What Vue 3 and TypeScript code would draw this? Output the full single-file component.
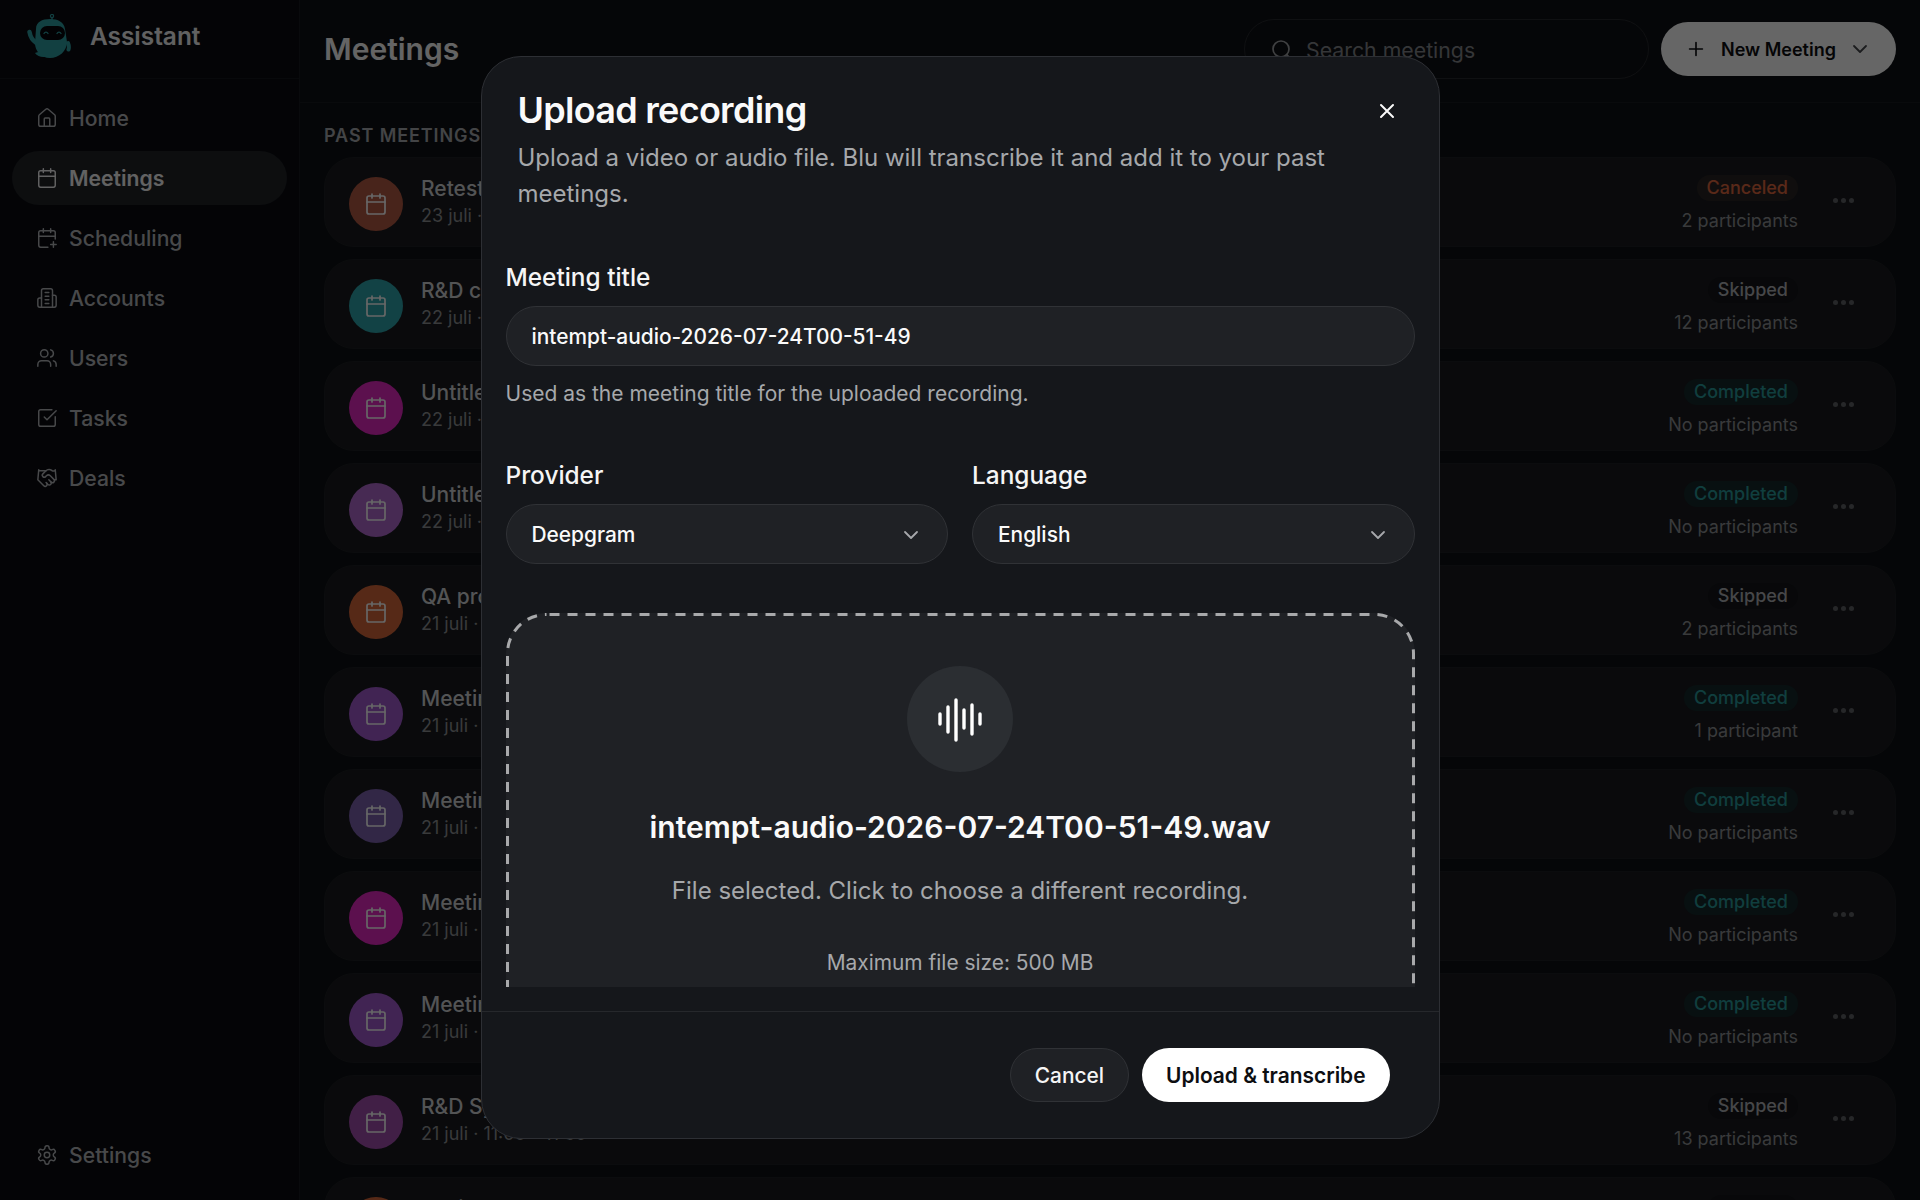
<template>
  <div class="app">
    <aside class="sidebar">
      <div class="brand">
        <svg class="logo" viewBox="0 0 44 44" width="44" height="44" fill="none">
          <circle cx="25" cy="2" r="1.6" stroke="#2fa0a4" stroke-width="1.2" />
          <path d="M25 3.5V6" stroke="#2fa0a4" stroke-width="1.4" />
          <path d="M2.5 18c.8 5 3 8.5 7 11" stroke="#2fa0a4" stroke-width="4.5" stroke-linecap="round" />
          <path d="M41 29c1 2.500 1.200 4.500.5 6.500" stroke="#2fa0a4" stroke-width="4" stroke-linecap="round" />
          <path d="M8 39c3-1.500 5-1.500 9 0l1 4c-4 .5-8-1-10-4Z" fill="#2fa0a4" />
          <path d="M9 15C9 8 15 5 23 5c8 0 14 3 15 10l2 13c0 9-8 16-17 16-9 0-15-7-15-15Z" fill="#2fa0a4" />
          <rect x="13" y="12" width="25" height="14" rx="7" fill="#05060a" />
          <path d="M17 19.500c1-1.800 3-1.800 4 0M30 19.500c1-1.800 3-1.800 4 0" stroke="#2fa0a4" stroke-width="1.300" stroke-linecap="round" />
        </svg>
        <span class="brand-name">Assistant</span>
      </div>
      <nav class="nav">
        <a v-for="item in navItems" :key="item.label" class="nav-item" :class="{ active: item.label === 'Meetings' }">
          <svg class="nav-icon" viewBox="0 0 24 24" v-html="item.icon"></svg>
          {{ item.label }}
        </a>
      </nav>
      <a class="nav-item settings">
        <svg class="nav-icon" viewBox="0 0 24 24" v-html="settingsIcon"></svg>
        Settings
      </a>
    </aside>

    <main class="main">
      <header class="main-header">
        <h1>Meetings</h1>
        <div class="header-actions">
          <div class="search">
            <svg class="search-icon" viewBox="0 0 24 24">
              <circle cx="11" cy="11" r="8" />
              <path d="m21 21-4.300-4.300" />
            </svg>
            <span>Search meetings</span>
          </div>
          <button class="new-btn">
            <svg class="plus" viewBox="0 0 24 24"><path d="M5 12h14M12 5v14" /></svg>
            New Meeting
            <svg class="new-chevron" viewBox="0 0 24 24"><path d="m6 9 6 6 6-6" /></svg>
          </button>
        </div>
      </header>

      <section class="content">
        <div class="section-label">PAST MEETINGS</div>
        <div class="list">
          <div v-for="m in meetings" :key="m.title + m.color" class="row">
            <div class="avatar" :style="{ background: m.color }">
              <svg class="cal" viewBox="0 0 24 24" v-html="calendarIcon"></svg>
            </div>
            <div class="row-text">
              <div class="row-title">{{ m.title }}</div>
              <div class="row-date">{{ m.date }}</div>
            </div>
            <div class="row-meta">
              <span class="status" :class="m.status.toLowerCase()">{{ m.status }}</span>
              <span class="participants">{{ m.participants }}</span>
            </div>
            <div class="dots"><i></i><i></i><i></i></div>
          </div>
        </div>
      </section>
    </main>

    <div class="overlay">
      <div class="modal">
        <div class="modal-head">
          <div>
            <h2>Upload recording</h2>
            <p>Upload a video or audio file. Blu will transcribe it and add it to your past meetings.</p>
          </div>
          <svg class="close" viewBox="0 0 24 24"><path d="M18 6 6 18M6 6l12 12" /></svg>
        </div>

        <div class="modal-body">
          <label class="field-label">Meeting title</label>
          <div class="input">intempt-audio-2026-07-24T00-51-49</div>
          <div class="helper">Used as the meeting title for the uploaded recording.</div>

          <div class="select-grid">
            <div v-for="s in selects" :key="s.label">
              <label class="field-label">{{ s.label }}</label>
              <div class="input select">
                {{ s.value }}
                <svg class="chevron" viewBox="0 0 24 24"><path d="m6 9 6 6 6-6" /></svg>
              </div>
            </div>
          </div>

          <div class="dropzone">
            <!-- css dashed borders come out too short, the reference has long dashes -->
            <svg class="dash-frame"><rect class="dash-rect" x="1.5" y="1.5" rx="39" ry="39" /></svg>
            <div class="wave-circle">
              <svg viewBox="0 0 48 48" width="48" height="48">
                <path d="M4 19v10M12 12v25M20 5v40M28 15v18M36 10v29M44 19v10" />
              </svg>
            </div>
            <div class="file-name">intempt-audio-2026-07-24T00-51-49.wav</div>
            <div class="file-hint">File selected. Click to choose a different recording.</div>
            <div class="file-max">Maximum file size: 500 MB</div>
          </div>
        </div>

        <div class="modal-foot">
          <button class="btn cancel">Cancel</button>
          <button class="btn primary">Upload &amp; transcribe</button>
        </div>
      </div>
    </div>
  </div>
</template>

<script setup lang="ts">
interface Meeting {
  title: string
  date: string
  color: string
  status: 'Canceled' | 'Skipped' | 'Completed'
  participants: string
}

const calendarIcon =
  '<path d="M8 2v4M16 2v4M3 10h18"/><rect x="3" y="4" width="18" height="18" rx="2"/>'

const navItems = [
  {
    label: 'Home',
    icon: '<path d="M15 21v-8a1 1 0 0 0-1-1h-4a1 1 0 0 0-1 1v8"/><path d="M3 10a2 2 0 0 1 .709-1.528l7-5.999a2 2 0 0 1 2.582 0l7 5.999A2 2 0 0 1 21 10v9a2 2 0 0 1-2 2H5a2 2 0 0 1-2-2z"/>'
  },
  { label: 'Meetings', icon: calendarIcon },
  {
    label: 'Scheduling',
    icon: '<path d="M8 2v4M16 2v4M3 10h18M16 19h6M19 16v6"/><path d="M21 13V6a2 2 0 0 0-2-2H5a2 2 0 0 0-2 2v14a2 2 0 0 0 2 2h8"/>'
  },
  {
    label: 'Accounts',
    icon: '<path d="M6 22V4a2 2 0 0 1 2-2h8a2 2 0 0 1 2 2v18Z"/><path d="M6 12H4a2 2 0 0 0-2 2v6a2 2 0 0 0 2 2h2"/><path d="M18 9h2a2 2 0 0 1 2 2v9a2 2 0 0 1-2 2h-2"/><path d="M10 6h4M10 10h4M10 14h4M10 18h4"/>'
  },
  {
    label: 'Users',
    icon: '<path d="M16 21v-2a4 4 0 0 0-4-4H6a4 4 0 0 0-4 4v2"/><circle cx="9" cy="7" r="4"/><path d="M22 21v-2a4 4 0 0 0-3-3.870"/><path d="M16 3.130a4 4 0 0 1 0 7.750"/>'
  },
  {
    label: 'Tasks',
    icon: '<path d="M21 10.656V19a2 2 0 0 1-2 2H5a2 2 0 0 1-2-2V5a2 2 0 0 1 2-2h12.344"/><path d="m9 11 3 3L22 4"/>'
  },
  {
    label: 'Deals',
    icon: '<path d="m11 17 2 2a1 1 0 1 0 3-3"/><path d="m14 14 2.500 2.500a1 1 0 1 0 3-3l-3.880-3.880a3 3 0 0 0-4.240 0l-.880.880a1 1 0 1 1-3-3l2.810-2.810a5.790 5.790 0 0 1 7.060-.870l.470.280a2 2 0 0 0 1.420.250L21 4"/><path d="m21 3 1 11h-2"/><path d="M3 3 2 14l6.500 6.500a1 1 0 1 0 3-3"/><path d="M3 4h8"/>'
  }
]

const settingsIcon =
  '<path d="M12.220 2h-.440a2 2 0 0 0-2 2v.180a2 2 0 0 1-1 1.730l-.430.250a2 2 0 0 1-2 0l-.150-.080a2 2 0 0 0-2.730.730l-.220.380a2 2 0 0 0 .730 2.730l.150.100a2 2 0 0 1 1 1.720v.510a2 2 0 0 1-1 1.740l-.150.090a2 2 0 0 0-.730 2.730l.220.380a2 2 0 0 0 2.730.730l.150-.080a2 2 0 0 1 2 0l.430.250a2 2 0 0 1 1 1.730V20a2 2 0 0 0 2 2h.440a2 2 0 0 0 2-2v-.180a2 2 0 0 1 1-1.730l.430-.250a2 2 0 0 1 2 0l.150.080a2 2 0 0 0 2.730-.730l.220-.390a2 2 0 0 0-.730-2.730l-.150-.080a2 2 0 0 1-1-1.740v-.500a2 2 0 0 1 1-1.740l.150-.090a2 2 0 0 0 .730-2.730l-.220-.380a2 2 0 0 0-2.730-.730l-.150.080a2 2 0 0 1-2 0l-.430-.250a2 2 0 0 1-1-1.730V4a2 2 0 0 0-2-2z"/><circle cx="12" cy="12" r="3"/>'

const selects = [
  { label: 'Provider', value: 'Deepgram' },
  { label: 'Language', value: 'English' }
]

const meetings: Meeting[] = [
  { title: 'Retest call', date: '23 juli · 14:00', color: '#b55a44', status: 'Canceled', participants: '2 participants' },
  { title: 'R&D call', date: '22 juli · 16:30', color: '#2fa5ac', status: 'Skipped', participants: '12 participants' },
  { title: 'Untitled meeting', date: '22 juli · 15:10', color: '#e628c4', status: 'Completed', participants: 'No participants' },
  { title: 'Untitled meeting', date: '22 juli · 13:40', color: '#b26ad0', status: 'Completed', participants: 'No participants' },
  { title: 'QA process', date: '21 juli · 17:00', color: '#d8683a', status: 'Skipped', participants: '2 participants' },
  { title: 'Meeting', date: '21 juli · 15:30', color: '#a35ad0', status: 'Completed', participants: '1 participant' },
  { title: 'Meeting', date: '21 juli · 14:20', color: '#7e62b0', status: 'Completed', participants: 'No participants' },
  { title: 'Meeting', date: '21 juli · 13:15', color: '#e628c4', status: 'Completed', participants: 'No participants' },
  { title: 'Meeting', date: '21 juli · 12:05', color: '#a35ad0', status: 'Completed', participants: 'No participants' },
  { title: 'R&D Sync', date: '21 juli · 11:00 - 11:30', color: '#a44fb0', status: 'Skipped', participants: '13 participants' },
  { title: 'Review', date: '20 juli · 10:00', color: '#d8683a', status: 'Skipped', participants: '2 participants' }
]
</script>

<style scoped>
.app {
  display: flex;
  height: 100vh;
  overflow: hidden;
  background: #0e1014;
  color: #fafafa;
  font-family: Inter, "Noto Sans", sans-serif;
}

.sidebar {
  width: 299px;
  flex: none;
  display: flex;
  flex-direction: column;
  background: #0a0c11;
  border-right: 1px solid #17191e;
  box-sizing: content-box;
}

.brand {
  height: 79px;
  box-sizing: border-box;
  padding: 0 0 6px 27px;
  display: flex;
  align-items: center;
  gap: 19px;
  border-bottom: 1px solid #15171c;
}

.brand-name {
  font-size: 24.400px;
  font-weight: 600;
  color: #fff;
  opacity: .95;
}

.nav {
  display: flex;
  flex-direction: column;
  gap: 6px;
  padding: 12px 12px 0;
}

.nav-item {
  height: 54px;
  display: flex;
  align-items: center;
  gap: 11px;
  padding-left: 24px;
  border-radius: 27px;
  font-size: 21.200px;
  font-weight: 500;
  color: #b4b6ba;
}

.nav-item.active {
  background: #212327;
  color: #f4f4f5;
  font-weight: 600;
}

.nav-icon {
  width: 22px;
  height: 22px;
  flex: none;
  fill: none;
  stroke: currentColor;
  stroke-width: 1.600;
  stroke-linecap: round;
  stroke-linejoin: round;
}

.settings {
  margin: auto 12px 18px;
}

.main {
  flex: 1;
  min-width: 0;
  display: flex;
  flex-direction: column;
}

.main-header {
  height: 103px;
  flex: none;
  box-sizing: border-box;
  padding: 0 24px 4px;
  display: flex;
  align-items: center;
  justify-content: space-between;
  border-bottom: 1px solid #17191e;
}

h1 {
  margin: 0;
  font-size: 30px;
  font-weight: 600;
}

.header-actions {
  display: flex;
  align-items: center;
  gap: 12px;
}

.search {
  width: 405px;
  height: 60px;
  box-sizing: border-box;
  padding: 2px 0 0 25px;
  display: flex;
  align-items: center;
  gap: 12px;
  border: 1px solid #26282d;
  border-radius: 30px;
  font-size: 21.300px;
  color: #85878c;
}

.search-icon {
  width: 24px;
  height: 24px;
  fill: none;
  stroke: #a0a2a6;
  stroke-width: 1.700;
  stroke-linecap: round;
}

.new-btn {
  width: 235px;
  height: 54px;
  box-sizing: border-box;
  padding: 0 0 0 24px;
  display: flex;
  align-items: center;
  border: 0;
  border-radius: 27px;
  background: #fff;
  color: #0d0e11;
  font: 600 18px Inter, sans-serif;
}

.plus {
  width: 22px;
  height: 22px;
  margin-right: 14px;
  fill: none;
  stroke: #0d0e11;
  stroke-width: 1.800;
  stroke-linecap: round;
}

.new-chevron {
  width: 24px;
  height: 24px;
  margin-left: 12px;
  fill: none;
  stroke: #45474b;
  stroke-width: 1.800;
  stroke-linecap: round;
  stroke-linejoin: round;
}

.content {
  flex: 1;
  min-height: 0;
  padding: 0 24px;
}

.section-label {
  height: 54px;
  display: flex;
  align-items: center;
  padding-top: 10px;
  box-sizing: border-box;
  font-size: 18px;
  font-weight: 600;
  letter-spacing: .05em;
  color: #a8aaae;
}

.list {
  display: flex;
  flex-direction: column;
  gap: 12px;
}

.row {
  height: 90px;
  flex: none;
  box-sizing: border-box;
  padding: 0 24px;
  display: flex;
  align-items: center;
  border: 1px solid #1d1f23;
  border-radius: 30px;
  background: #191b1f;
}

.avatar {
  width: 54px;
  height: 54px;
  margin-top: 3px;
  flex: none;
  display: flex;
  align-items: center;
  justify-content: center;
  border-radius: 50%;
}

.cal {
  width: 24px;
  height: 24px;
  fill: none;
  stroke: #fff;
  stroke-width: 1.700;
  stroke-linecap: round;
  stroke-linejoin: round;
}

.row-text {
  margin-left: 18px;
  display: flex;
  flex-direction: column;
  gap: 2px;
}

.row-title {
  font-size: 21px;
  line-height: 26px;
  font-weight: 500;
  color: #d0d1d4;
}

.row-date {
  font-size: 18px;
  line-height: 24px;
  color: #8f9195;
}

.row-meta {
  margin: 5px 0 0 auto;
  display: flex;
  flex-direction: column;
  align-items: flex-end;
  gap: 7px;
}

.status {
  height: 26px;
  padding: 0 10px;
  line-height: 26px;
  border-radius: 13px;
  font-size: 18px;
  font-weight: 500;
  background: #26282c;
}

.status.canceled {
  color: #e0683f;
  background: #2a2523;
}

.status.skipped {
  color: #b0b2b6;
  background: #141519;
}

.status.completed {
  color: #2a9c9c;
  background: #152a2c;
}

.participants {
  font-size: 18px;
  line-height: 26px;
  color: #8f9195;
}

.dots {
  margin: -3px 17px 0 35px;
  display: flex;
  gap: 3px;
}

.dots i {
  width: 5px;
  height: 5px;
  border-radius: 50%;
  background: #606266;
}

.overlay {
  position: fixed;
  inset: 0;
  display: flex;
  justify-content: center;
  align-items: flex-start;
  background: rgba(0, 0, 0, .6);
}

.modal {
  width: 959px;
  height: 1083px;
  margin-top: 56px;
  box-sizing: border-box;
  display: flex;
  flex-direction: column;
  background: #15171b;
  border: 1px solid #2d2f34;
  border-radius: 40px;
  color: #fafafa;
}

.modal-head {
  flex: none;
  padding: 30px 36px 0;
  display: flex;
  justify-content: space-between;
  align-items: flex-start;
}

h2 {
  margin: 0;
  font-size: 36px;
  line-height: 46px;
  font-weight: 600;
  letter-spacing: -.02em;
}

.modal-head p {
  margin: 7px 0 0;
  width: 830px;
  font-size: 24px;
  line-height: 36px;
  color: #a6a8ab;
}

.close {
  width: 24px;
  height: 24px;
  margin: 12px 4px 0 0;
  flex: none;
  fill: none;
  stroke: #fafafa;
  stroke-width: 2;
  stroke-linecap: round;
}

.modal-body {
  flex: 1;
  min-height: 0;
  margin: 49px 24px 24px;
  overflow: hidden;
}

.field-label {
  display: block;
  font-size: 24.400px;
  line-height: 32px;
  font-weight: 500;
  color: #f5f5f5;
}

.input {
  height: 60px;
  margin-top: 13px;
  box-sizing: border-box;
  padding: 1px 25px 0;
  display: flex;
  align-items: center;
  background: #1f2125;
  border: 1px solid #303236;
  border-radius: 30px;
  font-size: 20.900px;
  font-weight: 500;
}

.helper {
  margin-top: 14px;
  font-size: 21px;
  line-height: 28px;
  color: #a6a8ab;
}

.select-grid {
  margin-top: 51px;
  display: grid;
  grid-template-columns: 1fr 1fr;
  gap: 24px;
}

.select {
  justify-content: space-between;
  padding-right: 24px;
}

.chevron {
  width: 24px;
  height: 24px;
  fill: none;
  stroke: #a6a8ab;
  stroke-width: 1.800;
  stroke-linecap: round;
  stroke-linejoin: round;
}

.dropzone {
  position: relative;
  margin-top: 49px;
  height: 420px;
  box-sizing: border-box;
  padding-top: 53px;
  display: flex;
  flex-direction: column;
  align-items: center;
  background: #1f2125;
  border-radius: 40px;
}

.dash-frame {
  position: absolute;
  inset: 0;
  width: 100%;
  height: 100%;
}

.dash-rect {
  width: calc(100% - 3px);
  height: calc(100% - 3px);
  fill: none;
  stroke: #a8a9ab;
  stroke-width: 3;
  stroke-dasharray: 10 8;
  stroke-dashoffset: -3;
}

.wave-circle {
  width: 106px;
  height: 106px;
  flex: none;
  display: flex;
  align-items: center;
  justify-content: center;
  border-radius: 50%;
  background: #2b2e32;
}

.wave-circle path {
  fill: none;
  stroke: #fff;
  stroke-width: 3.400;
  stroke-linecap: round;
}

.file-name {
  margin-top: 35px;
  font-size: 30px;
  line-height: 40px;
  font-weight: 600;
}

.file-hint {
  margin-top: 26px;
  font-size: 24px;
  line-height: 36px;
  color: #a6a8ab;
}

.file-max {
  margin-top: 40px;
  font-size: 20.900px;
  line-height: 28px;
  color: #a6a8ab;
}

.modal-foot {
  flex: none;
  height: 127px;
  box-sizing: border-box;
  padding: 36px 49px 0 0;
  display: flex;
  justify-content: flex-end;
  gap: 13px;
  border-top: 1px solid #26282c;
}

.btn {
  height: 54px;
  padding: 0 24px;
  border-radius: 27px;
  font: 600 20.900px Inter, sans-serif;
}

.cancel {
  background: #1f2125;
  border: 1px solid #303236;
  color: #f5f5f5;
  font-weight: 500;
}

.primary {
  background: #fff;
  border: 0;
  color: #0d0e11;
}
</style>

<style>
html, body {
  margin: 0;
  background: #050608;
  overflow: hidden;
}
</style>
